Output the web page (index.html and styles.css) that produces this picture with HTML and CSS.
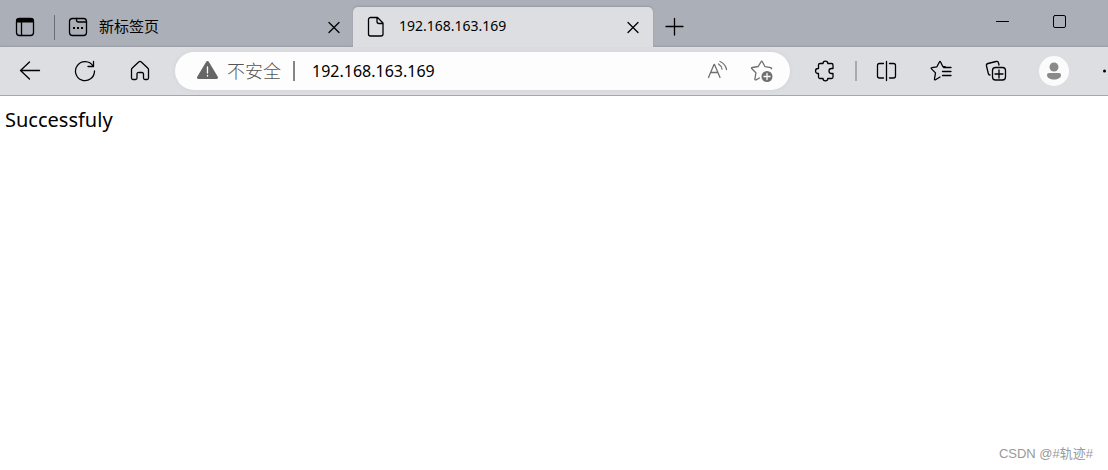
FILE: index.html
```html
<!DOCTYPE html>
<html lang="zh-CN">
<head>
  <meta charset="UTF-8" />
  <meta name="viewport" content="width=device-width, initial-scale=1.0" />
  <title>192.168.163.169</title>
  <link rel="stylesheet" href="styles.css">
</head>
<body>
  <header class="browser">
    <div class="tabbar">
      <button class="icon-btn" aria-label="标签页操作菜单">
        <svg viewBox="0 0 24 24"><rect x="3.500" y="3.500" width="17" height="17" rx="3"/><path class="solid" d="M3 7.500V6a3 3 0 0 1 3-3h12a3 3 0 0 1 3 3v1.500z"/><path d="M8.500 7v13.500"/></svg>
      </button>
      <span class="tab-divider"></span>
      <div class="tab">
        <svg class="tab-icon" viewBox="0 0 24 24"><rect x="3.500" y="3.500" width="17" height="17" rx="3"/><path d="M10.500 3.500v1.500a2 2 0 0 0 2 2h8"/><path class="solid" d="M7 12h2v2H7zM11 12h2v2h-2zM15 12h2v2h-2z"/></svg>
        <span class="tab-title">新标签页</span>
        <button class="close-btn" aria-label="关闭标签页">
          <svg viewBox="0 0 16 16"><path d="M3 3.500l10 10M13 3.500l-10 10"/></svg>
        </button>
      </div>
      <div class="tab active">
        <svg class="tab-icon" viewBox="0 0 24 24"><path d="M6.500 2.500h7l5.500 5.500v11a2 2 0 0 1-2 2H6.500a2 2 0 0 1-2-2v-14.500a2 2 0 0 1 2-2zM13 2.500v4a2 2 0 0 0 2 2h4"/></svg>
        <span class="tab-title">192.168.163.169</span>
        <button class="close-btn" aria-label="关闭标签页">
          <svg viewBox="0 0 16 16"><path d="M3 3.500l10 10M13 3.500l-10 10"/></svg>
        </button>
      </div>
      <button class="icon-btn new-tab" aria-label="新建标签页">
        <svg viewBox="0 0 24 24"><path d="M12.500 3.500v16.500M4 11.500h17"/></svg>
      </button>
      <div class="window-btns">
        <button class="icon-btn" aria-label="最小化">
          <svg viewBox="0 0 24 24"><path d="M5.500 11.500h12"/></svg>
        </button>
        <button class="icon-btn" aria-label="最大化">
          <svg viewBox="0 0 24 24"><rect x="5.500" y="5.500" width="12" height="12" rx="1.500"/></svg>
        </button>
      </div>
    </div>

    <div class="toolbar">
      <div class="nav-btns">
        <button class="icon-btn" aria-label="返回">
          <svg viewBox="0 0 24 24"><path d="M21.500 11.500H3M11.500 3l-9 8.500 9 8.500"/></svg>
        </button>
        <button class="icon-btn" aria-label="刷新">
          <svg viewBox="0 0 24 24"><path d="M20 7A9.500 9.500 0 1 0 21.500 12M20.500 2.500v5H15"/></svg>
        </button>
        <button class="icon-btn" aria-label="主页">
          <svg viewBox="0 0 24 24"><path d="M3.500 10.500a2 2 0 0 1 .8-1.500l6.400-6a2 2 0 0 1 2.600 0l6.400 6a2 2 0 0 1 .8 1.500v8.500a1.500 1.500 0 0 1-1.500 1.500h-2a1.500 1.500 0 0 1-1.500-1.500v-4a1.500 1.500 0 0 0-1.500-1.500h-3A1.500 1.500 0 0 0 9 15v4a1.500 1.500 0 0 1-1.500 1.500H5A1.500 1.500 0 0 1 3.500 19z"/></svg>
        </button>
      </div>

      <div class="address">
        <svg class="warn-icon" viewBox="0 0 24 24"><path class="warn" d="M12.500 3.500L21.500 18.500h-18z"/><path class="mark" d="M12.500 8v6M12.500 16.500v.5"/></svg>
        <span class="insecure">不安全</span>
        <span class="address-divider"></span>
        <input class="url" type="text" aria-label="地址栏" value="192.168.163.169">
        <button class="icon-btn" aria-label="大声朗读">
          <svg viewBox="0 0 24 24"><path d="M3.500 18.500L9 5.500h.5L15 18.500M5.500 13.500h7.500M13.500 5q3 2 3.500 5M15 2.500q5.500 2.500 6.500 8"/></svg>
        </button>
        <button class="icon-btn" aria-label="添加到收藏夹">
          <svg viewBox="0 0 24 24"><path d="M9.500 19L6 20.800c-.8.300-1.200 0-1.100-.8l1-6.200-4-4c-.7-.7-.5-1.200.3-1.300l6-1L11 2.800c.4-.9 1-.9 1.400 0L15 7.700l5.800 1c.9.100 1 .7.500 1.100"/><circle class="solid" cx="17" cy="17.500" r="5.500"/><path class="mark" d="M17 14.500v6M14 17.500h6"/></svg>
        </button>
      </div>

      <div class="tools">
        <button class="icon-btn" aria-label="扩展">
          <svg viewBox="0 0 24 24"><path d="M7 4.500h3a2.400 2.400 0 0 1 4.800 0H18.500a1.500 1.500 0 0 1 1.500 1.500v3.500h-1.500a2.400 2.400 0 0 0 0 5H20V18a1.500 1.500 0 0 1-1.500 1.500h-3.700a2.400 2.400 0 0 1-4.800 0H7A1.500 1.500 0 0 1 5.500 18v-3.500h-.5a2.500 2.500 0 0 1 0-5h.5V6A1.500 1.500 0 0 1 7 4.500z"/></svg>
        </button>
        <span class="tool-divider"></span>
        <button class="icon-btn split" aria-label="分屏窗口">
          <svg viewBox="0 0 24 24"><path d="M9.500 4.500h-4a2 2 0 0 0-2 2v10.500a2 2 0 0 0 2 2h4M15.500 4.500h4a2 2 0 0 1 2 2v10.500a2 2 0 0 1-2 2h-4M12.500 2.500v19"/></svg>
        </button>
        <button class="icon-btn" aria-label="收藏夹">
          <svg viewBox="0 0 24 24"><path d="M11 18l-4.500 2.700c-.7.400-1.200 0-1-.8l1-6-4-4c-.6-.6-.4-1.200.4-1.300l5-.8L10.400 3c.3-.8.900-.8 1.200 0l2.200 4.500 2.700.5M14.500 8.500h7.500M13.500 12.500h8.500M13.500 16.500h8.500"/></svg>
        </button>
        <button class="icon-btn" aria-label="集锦">
          <svg viewBox="0 0 24 24"><path d="M6 16c-1 0-1.500-.5-1.700-1.500L2.500 7c-.3-1.500.2-2.200 1.500-2.500l8-2c1.500-.4 2.200.1 2.500 1.500l.5 2"/><rect x="8.500" y="8.500" width="13" height="12.500" rx="3"/><path d="M15 11v8M11 15h8"/></svg>
        </button>
        <button class="profile" aria-label="个人资料">
          <svg viewBox="0 0 30 30"><circle cx="15" cy="11" r="4.500"/><path d="M10 17h10q2 0 2 2c0 2.800-3 4.500-7 4.500s-7-1.700-7-4.500q0-2 2-2z"/></svg>
        </button>
        <button class="more" aria-label="设置及其他">
          <svg viewBox="0 0 24 24"><circle class="solid" cx="13.500" cy="12" r="1.500"/><circle class="solid" cx="20" cy="12" r="1.500"/></svg>
        </button>
      </div>
    </div>
  </header>

  <main class="page">Successfuly</main>
  <footer class="watermark">CSDN @#轨迹#</footer>
</body>
</html>
```
FILE: styles.css
```css
* { box-sizing: border-box; }
body {
  margin: 0;
  min-height: 100vh;
  display: flex;
  flex-direction: column;
  font-family: "Noto Sans", "Noto Sans CJK SC", sans-serif;
  background: #fff;
  color: #000;
}
button {
  padding: 0;
  border: none;
  background: none;
  color: inherit;
  flex: none;
  cursor: pointer;
}
svg {
  display: block;
  width: 24px;
  height: 24px;
  flex: none;
  fill: none;
  stroke: currentColor;
  stroke-width: 1.3;
  stroke-linecap: round;
  stroke-linejoin: round;
}
.solid {
  fill: currentColor;
  stroke: none;
}
.icon-btn {
  width: 24px;
  height: 24px;
}
.browser {
  overflow: hidden;
}

/* tabs */
.tabbar {
  display: flex;
  align-items: center;
  height: 47px;
  padding: 7px 36px 0 13px;
  background: #abafb7;
  box-shadow: inset 0 -2px 2px -1px #9a9da4;
}
.tab-divider {
  width: 1px;
  height: 25px;
  margin-left: 17px;
  background: #6b6d72;
}
.tab {
  display: flex;
  align-items: center;
  flex: 0 1 300px;
  height: 40px;
  padding: 0 12px 0 11px;
  font-size: 14px;
}
.tab:not(.active) {
  flex-basis: 298px;
  padding-right: 11px;
  font-size: 15px;
}
.active {
  background: #dddee2;
  border-radius: 5px 5px 0 0;
  box-shadow: 0 -1px 2px #959aa2;
}
.tab-title {
  flex: 1;
  margin-left: 9px;
  padding-bottom: 3px;
  white-space: nowrap;
}
.active .tab-title {
  margin-left: 11px;
}
.close-btn svg {
  width: 16px;
  height: 16px;
}
.new-tab {
  margin-left: 9px;
}
.window-btns {
  display: flex;
  gap: 33px;
  margin: 0 0 10px auto;
}
.window-btns svg {
  stroke-width: 1;
}

/* navigation */
.toolbar {
  display: flex;
  align-items: center;
  height: 49px;
  padding-left: 18px;
  background: #dddee2;
  border-bottom: 1px solid #a6a7ab;
}
.nav-btns {
  display: flex;
  gap: 31px;
}
.address {
  display: flex;
  align-items: center;
  flex: 1;
  min-width: 0;
  height: 38px;
  margin: 0 23px;
  padding: 0 16px 0 20px;
  border-radius: 19px;
  background: #fdfdfd;
  box-shadow: 0 0 4px #d0d1d5;
  color: #707070;
}
.warn {
  fill: #666;
  stroke: #666;
  stroke-width: 3;
}
.mark {
  stroke: #fdfdfd;
}
.insecure {
  margin-left: 8px;
  padding-bottom: 2px;
  font-size: 18px;
  font-weight: 300;
  color: #555;
  white-space: nowrap;
}
.address-divider {
  width: 2px;
  height: 20px;
  margin: 0 17px 0 12px;
  background: #858585;
}
.url {
  flex: 1;
  min-width: 0;
  padding: 0;
  border: none;
  outline: none;
  background: none;
  font-family: inherit;
  font-size: 16px;
  color: #000;
}
.address .icon-btn + .icon-btn {
  margin-left: 21px;
}
.tools {
  display: flex;
  align-items: center;
  gap: 31px;
}
.tool-divider {
  width: 2px;
  height: 20px;
  margin: 0 -14px 0 -13px;
  background: #a9aaad;
}
.profile {
  width: 30px;
  height: 30px;
  border-radius: 50%;
  background: #fbfbfb;
}
.profile svg {
  width: 30px;
  height: 30px;
  fill: #8a8a8a;
  stroke: none;
}
.more {
  width: 17px;
  margin-left: -9px;
  overflow: hidden;
}

/* content */
.page {
  flex: 1;
  padding: 8px 5px;
  font-size: 20px;
  line-height: 32px;
}
.watermark {
  padding: 0 15px 6px;
  font-family: "Liberation Sans", "Noto Sans CJK SC", sans-serif;
  font-size: 13px;
  line-height: 20px;
  text-align: right;
  color: #999;
}
```
